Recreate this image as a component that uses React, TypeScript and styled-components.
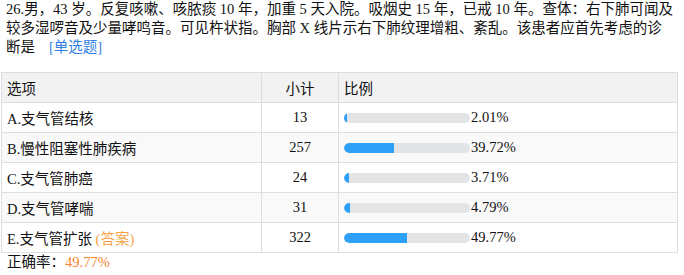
import React from 'react'
import styled, { createGlobalStyle } from 'styled-components'

const GlobalStyle = createGlobalStyle`
  body {
    margin: 0;
    background: #fff;
    font-family: "Liberation Serif", "Noto Sans CJK SC", serif;
    color: #111;
  }
`;

const Page = styled.div`
  padding-left: 1px;
  width: 677px;
  font-size: 14.5px;
`;

const Question = styled.div`
  padding-left: 5px;
  line-height: 19px;
  white-space: nowrap;
  margin-bottom: 15px;
`;

const Tag = styled.span`
  color: #2f80e4;
  margin-left: 14px;
`;

const Table = styled.table`
  width: 677px;
  border-collapse: collapse;
  border: 1px solid #dedede;
  table-layout: fixed;
`;

const Row = styled.tr<{ $shade?: string }>`
  height: 30px;
  background: ${p => p.$shade || '#fff'};
`;

const Cell = styled.td<{ $center?: boolean }>`
  border: 1px solid #dedede;
  padding: 0 5px;
  text-align: ${p => (p.$center ? 'center' : 'left')};
  vertical-align: middle;
  white-space: nowrap;
`;

const BarWrap = styled.div`
  display: flex;
  align-items: center;
`;

const Track = styled.div`
  width: 126px;
  height: 10px;
  border-radius: 5px;
  background: #e3e4e6;
  overflow: hidden;
`;

const Fill = styled.div`
  height: 100%;
  background: #2ea0f7;
  border-radius: 5px 0 0 5px;
`;

const Pct = styled.span`
  margin-left: 1px;
`;

const Answer = styled.span`
  color: #f5a346;
`;

const Rate = styled.div`
  padding-left: 6px;
  line-height: 18px;
`;

const RateValue = styled.span`
  color: #f7852f;
`;

const options = [
  { label: 'A.支气管结核', count: 13, pct: 2.01 },
  { label: 'B.慢性阻塞性肺疾病', count: 257, pct: 39.72 },
  { label: 'C.支气管肺癌', count: 24, pct: 3.71 },
  { label: 'D.支气管哮喘', count: 31, pct: 4.79 },
  { label: 'E.支气管扩张', count: 322, pct: 49.77, answer: true },
];

export default function App() {
  return (
    <Page>
      <GlobalStyle />
      <Question>
        26.男，43 岁。反复咳嗽、咳脓痰 10 年，加重 5 天入院。吸烟史 15 年，已戒 10 年。查体：右下肺可闻及
        <br />
        较多湿啰音及少量哮鸣音。可见杵状指。胸部 X 线片示右下肺纹理增粗、紊乱。该患者应首先考虑的诊
        <br />
        断是<Tag>[单选题]</Tag>
      </Question>
      <Table>
        <colgroup>
          <col style={{ width: 260 }} />
          <col style={{ width: 77 }} />
          <col />
        </colgroup>
        <tbody>
          <Row $shade="#f2f2f2">
            <Cell>选项</Cell>
            <Cell $center>小计</Cell>
            <Cell>比例</Cell>
          </Row>
          {options.map((o, i) => (
            <Row key={o.label} $shade={i % 2 === 1 ? '#f9f9f9' : '#fff'}>
              <Cell>
                {o.label}
                {o.answer && <Answer> (答案)</Answer>}
              </Cell>
              <Cell $center>{o.count}</Cell>
              <Cell>
                <BarWrap>
                  <Track>
                    <Fill style={{ width: `${o.pct}%` }} />
                  </Track>
                  <Pct>{o.pct.toFixed(2)}%</Pct>
                </BarWrap>
              </Cell>
            </Row>
          ))}
        </tbody>
      </Table>
      <Rate>
        正确率：<RateValue>49.77%</RateValue>
      </Rate>
    </Page>
  );
}
